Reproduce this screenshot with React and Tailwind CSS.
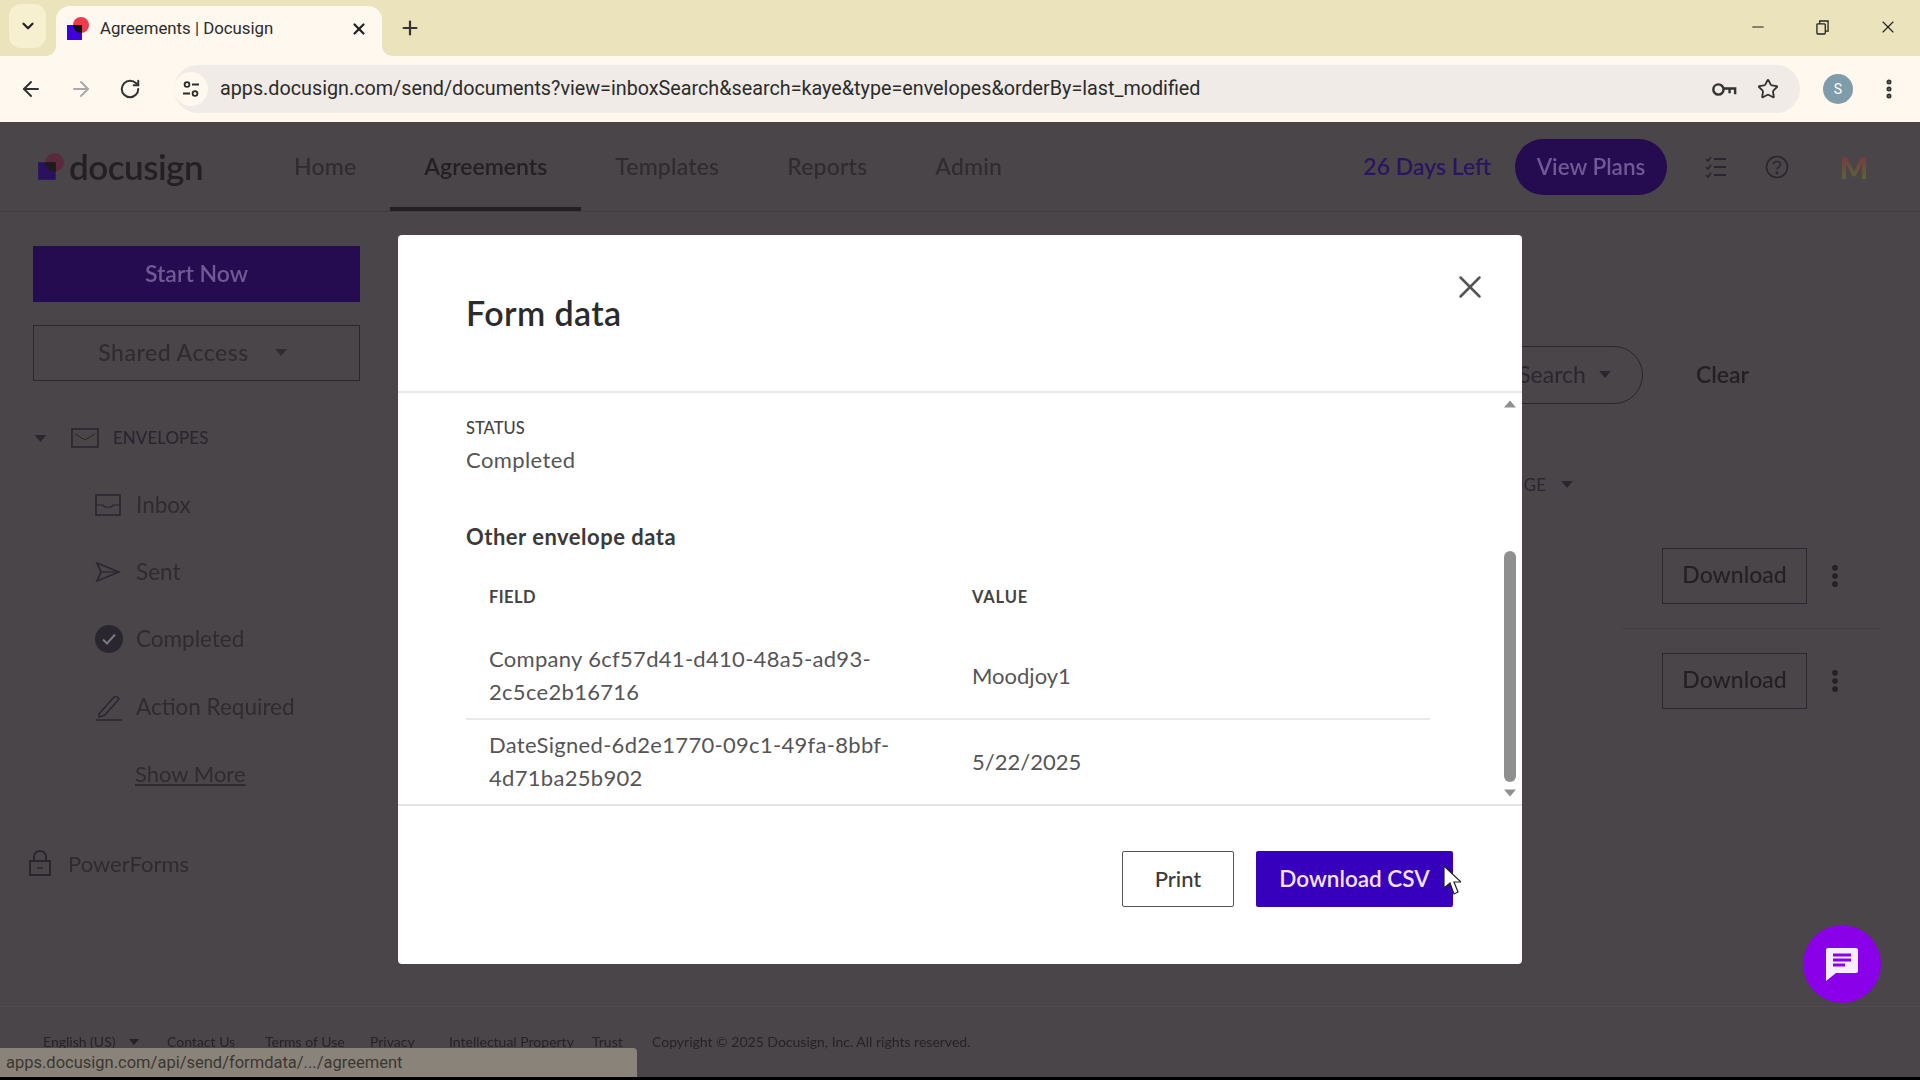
import React from 'react'
import { ArrowLeft, ArrowRight, ChevronDown, EllipsisVertical, Minus, Plus, RotateCw, Star, X } from 'lucide-react'

const Logo = ({ dim }) => (
  <svg viewBox="0 0 24 24" className="w-full h-full">
    <circle cx="15" cy="8" r="8" fill={dim ? '#5b2a3a' : '#f0384f'} />
    <rect x="1" y="8" width="15" height="15" fill={dim ? '#2a1160' : '#4000e0'} />
    <path d="M7 8h9v8A8 8 0 0 1 7 8z" fill={dim ? '#1d1a20' : '#111'} />
  </svg>
)

const Caret = ({ className }) => (
  <svg viewBox="0 0 10 6" className={className} fill="currentColor">
    <path d="M0 0h10L5 6z" />
  </svg>
)

const TabFlare = ({ className }) => (
  <svg viewBox="0 0 10 10" className={className} fill="#fef8ee">
    <path d="M10 0v10H0A10 10 0 0 0 10 0z" />
  </svg>
)

const MailIcon = () => (
  <svg viewBox="0 0 28 20" className="w-[28px] h-[20px]" fill="none" stroke="#2a2630" strokeWidth="1.6">
    <rect x="1" y="1" width="26" height="18" />
    <path d="M4 6l10 6 10-6" strokeWidth="1" />
  </svg>
)

const InboxIcon = () => (
  <svg viewBox="0 0 26 22" className="w-[26px] h-[22px]" fill="none" stroke="#2a2630" strokeWidth="1.6">
    <rect x="1" y="1" width="24" height="20" />
    <path d="M1 11h7c1 3 9 3 10 0h7" strokeWidth="1.2" />
  </svg>
)

const SentIcon = () => (
  <svg viewBox="0 0 26 22" className="w-[26px] h-[22px]" fill="none" stroke="#2a2630" strokeWidth="1.7">
    <path d="M2 2l22 9-22 9 4-9z" />
    <path d="M6 11h18" strokeWidth="1.2" />
  </svg>
)

const DoneIcon = () => (
  <svg viewBox="0 0 28 28" className="w-[28px] h-[28px]">
    <circle cx="14" cy="14" r="14" fill="#2a2630" />
    <path d="M8 14.5l4 4 8-9" fill="none" stroke="#7b7680" strokeWidth="2" />
  </svg>
)

const PenIcon = () => (
  <svg viewBox="0 0 28 28" className="w-[28px] h-[28px]" fill="none" stroke="#2a2630" strokeWidth="1.5">
    <path d="M4 21L19 4c2-1 4 0 5 2L10 22l-6 2z" />
    <path d="M1 27h26" />
  </svg>
)

const LockIcon = () => (
  <svg viewBox="0 0 24 28" className="w-[24px] h-[28px]" fill="none" stroke="#2a2630" strokeWidth="2">
    <path d="M6 12V8a6 6 0 0 1 12 0v4" />
    <rect x="2" y="12" width="20" height="14" />
    <path d="M9 19h6" strokeWidth="1.5" />
  </svg>
)

const TuneIcon = () => (
  <svg viewBox="0 0 20 20" className="w-[20px] h-[20px]" fill="none" stroke="#2b2b2b" strokeWidth="1.8">
    <circle cx="6" cy="5.5" r="2.4" />
    <path d="M11 5.5h7M2 14.5h7" />
    <circle cx="14" cy="14.5" r="2.4" />
  </svg>
)

const KeyIcon = () => (
  <svg viewBox="0 0 28 18" className="w-[26px] h-[17px]" fill="none" stroke="#333" strokeWidth="2.6">
    <circle cx="8" cy="9" r="5.5" />
    <path d="M13.5 8H26v6M20 8v5" />
  </svg>
)

const RestoreIcon = () => (
  <svg viewBox="0 0 14 16" className="w-[13px] h-[15px]" fill="none" stroke="#222" strokeWidth="1.4">
    <rect x="1" y="4" width="9" height="11" rx="1" />
    <path d="M4 4V1h9v11h-3" />
  </svg>
)

const ChecklistIcon = () => (
  <svg viewBox="0 0 24 24" className="w-[24px] h-[24px]" fill="none" stroke="#2a2630" strokeWidth="2">
    <path d="M10 4h12M10 12h12M10 20h12" />
    <path d="M2 4l2 2 3-4M2 12l2 2 3-4M2 20l2 2 3-4" strokeWidth="1.6" />
  </svg>
)

const HelpIcon = () => (
  <svg viewBox="0 0 24 24" className="w-[24px] h-[24px]" fill="none" stroke="#2a2630" strokeWidth="1.6">
    <circle cx="12" cy="12" r="10.5" />
    <path d="M8.5 9.5C8.5 5.5 15.5 5.5 15.5 9.5c0 2.5-3.5 2.5-3.5 5" />
    <circle cx="12" cy="18" r="0.6" />
  </svg>
)

const ChatIcon = () => (
  <svg viewBox="0 0 34 34" className="w-[34px] h-[34px]">
    <path d="M3 1h28a2 2 0 0 1 2 2v21a2 2 0 0 1-2 2H11l-10 8V3a2 2 0 0 1 2-2z" fill="#f7eefd" />
    <path d="M8 8h18M8 13h18M8 18h12" stroke="#8a00e8" strokeWidth="3" />
  </svg>
)

const Cursor = () => (
  <svg viewBox="0 0 18 30" className="w-[18px] h-[30px]">
    <path d="M1 1v22l6-5 4 11 4-2-4-10h7z" fill="#fff" stroke="#222" strokeWidth="1.2" />
  </svg>
)

const navItems = ['Home', 'Agreements', 'Templates', 'Reports', 'Admin']

const sideItems = [
  { label: 'Inbox', icon: <InboxIcon /> },
  { label: 'Sent', icon: <SentIcon /> },
  { label: 'Completed', icon: <DoneIcon /> },
  { label: 'Action Required', icon: <PenIcon /> },
]

const footerLinks = [
  { label: 'Contact Us', cls: 'w-[98px]' },
  { label: 'Terms of Use', cls: 'w-[105px]' },
  { label: 'Privacy', cls: 'w-[79px]' },
  { label: 'Intellectual Property', cls: 'w-[143px]' },
  { label: 'Trust', cls: 'w-[60px]' },
]

const formRows = [
  { field: 'Company 6cf57d41-d410-48a5-ad93-2c5ce2b16716', value: 'Moodjoy1' },
  { field: 'DateSigned-6d2e1770-09c1-49fa-8bbf-4d71ba25b902', value: '5/22/2025' },
]

const DownloadRow = () => (
  <div className="flex items-center h-[104px] w-[258px] justify-start pl-[40px] gap-[20px]">
    <button className="w-[145px] h-[56px] border border-[#2a2630] pb-[2px] text-[23px] text-[#231f24] font-medium">Download</button>
    <EllipsisVertical size={28} strokeWidth={2.8} color="#231f24" className="-ml-[6px]" />
  </div>
)

const FormModal = () => (
  <div className="absolute left-[398px] top-[113px] w-[1124px] h-[729px] bg-white rounded flex flex-col font-['Lato',sans-serif]">
    <div className="h-[158px] shrink-0 border-b-2 border-[#e9e9e9] flex items-start justify-between pl-[68px] pr-[33px]">
      <h1 className="text-[34px] leading-[40px] mt-[58px] font-semibold tracking-[0.4px] text-[#2b2b2b]">Form data</h1>
      <X size={38} strokeWidth={1.6} color="#555" className="mt-[33px]" />
    </div>
    <div className="flex-1 min-h-0 flex border-b-2 border-[#e3e3e3]">
      <div className="flex-1 pl-[68px]">
        <div className="text-[16.5px] leading-[20px] mt-[25px] font-medium text-[#444]">STATUS</div>
        <div className="text-[22px] leading-[28px] mt-[8px] tracking-[0.4px] text-[#555]">Completed</div>
        <h2 className="text-[22px] leading-[28px] mt-[49px] font-bold tracking-[0.5px] text-[#3a3a3a]">Other envelope data</h2>
        <table className="w-[964px] table-fixed border-collapse mt-[34px]">
          <thead>
            <tr className="h-[20px] text-left text-[16.5px] font-bold text-[#444]">
              <th className="w-[483px] pl-[23px] py-0 font-bold tracking-wide">FIELD</th>
              <th className="pl-[23px] py-0 font-bold tracking-wider">VALUE</th>
            </tr>
          </thead>
          <tbody className="text-[22px] leading-[33px] tracking-[0.3px] text-[#555]">
            <tr className="h-[23px]"><td colSpan="2"></td></tr>
            {formRows.map((row, index) => (
              <tr key={index} className={index === 0 ? 'h-[86px] border-b-2 border-[#e9e9e9]' : 'h-[84px]'}>
                <td className="pl-[23px] pr-[23px]">{row.field}</td>
                <td className="pl-[23px] tracking-normal">{row.value}</td>
              </tr>
            ))}
          </tbody>
        </table>
      </div>
      <div className="w-[12px] mr-[6px] shrink-0 flex flex-col items-center text-[#8f8f8f]">
        <Caret className="w-[12px] h-[8px] mt-[7px] rotate-180" />
        <div className="w-[12px] h-[231px] mt-[143px] rounded-full bg-[#8f8f8f]"></div>
        <Caret className="w-[12px] h-[8px] mt-[7px]" />
      </div>
    </div>
    <div className="h-[158px] shrink-0 flex justify-end items-start gap-[22px] pt-[45px] pr-[69px]">
      <button className="w-[112px] h-[56px] border border-[#555] rounded-[2px] pb-[2px] text-[22px] font-medium text-[#3a3a3a]">Print</button>
      <button className="relative w-[197px] h-[56px] bg-[#3600bd] rounded-[2px] text-[22.5px] font-semibold text-[#f6e2ff]">
        Download CSV
        <span className="absolute left-[187px] top-[14px]"><Cursor /></span>
      </button>
    </div>
  </div>
)

const App = () => {
  return (
    <div className="w-[1920px] h-[1080px] overflow-hidden flex flex-col bg-black font-['Roboto',sans-serif]">
      {/* browser tabs */}
      <div className="h-[56px] shrink-0 bg-[#ebe3bb] flex items-end pl-[9px]">
        <div className="w-[37px] h-[44px] mb-[8px] rounded-[12px] bg-[#f7f0d0] flex items-center justify-center">
          <ChevronDown size={18} strokeWidth={3} color="#222" />
        </div>
        <div className="relative w-[326px] h-[50px] ml-[10px] rounded-t-[14px] bg-[#fef8ee] flex items-center pl-[10px] pr-[14px] pb-[5px]">
          <TabFlare className="absolute -left-[10px] bottom-0 w-[10px] h-[10px]" />
          <TabFlare className="absolute -right-[10px] bottom-0 w-[10px] h-[10px] -scale-x-100" />
          <span className="w-[24px] h-[24px] shrink-0"><Logo /></span>
          <span className="ml-[10px] text-[16.8px] text-[#2b2b2b]">Agreements | Docusign</span>
          <X size={18} strokeWidth={3} color="#222" className="ml-auto" />
        </div>
        <Plus size={22} strokeWidth={2.4} color="#333" className="ml-[17px] mb-[17px]" />
        <div className="ml-auto h-[56px] flex items-center gap-[49px] pr-[22px] pb-[2px]">
          <Minus size={18} strokeWidth={1.6} color="#222" />
          <RestoreIcon />
          <X size={20} strokeWidth={1.4} color="#222" />
        </div>
      </div>

      {/* browser toolbar */}
      <div className="h-[66px] shrink-0 bg-[#fef8ee] flex items-center">
        <div className="w-[174px] flex items-center pl-[19px] gap-[26px] shrink-0">
          <ArrowLeft size={24} strokeWidth={2} color="#333" />
          <ArrowRight size={24} strokeWidth={2} color="#aaa" />
          <RotateCw size={22} strokeWidth={2.2} color="#333" />
        </div>
        <div className="w-[1626px] h-[48px] rounded-full bg-[#f0ebe6] flex items-center pr-[21px]">
          <span className="w-[34px] h-[34px] rounded-full bg-[#fef8ee] flex items-center justify-center shrink-0"><TuneIcon /></span>
          <span className="ml-[12px] text-[19.75px] text-[#2b2b2b]">apps.docusign.com/send/documents?view=inboxSearch&amp;search=kaye&amp;type=envelopes&amp;orderBy=last_modified</span>
          <span className="ml-auto flex items-center gap-[20px]">
            <KeyIcon />
            <Star size={22} strokeWidth={2} color="#333" />
          </span>
        </div>
        <div className="w-[30px] h-[30px] ml-[23px] rounded-full bg-[#7f9cab] text-white text-[14px] flex items-center justify-center">S</div>
        <EllipsisVertical size={24} strokeWidth={3} color="#333" className="ml-[24px]" />
      </div>

      {/* dimmed app */}
      <div className="relative h-[955px] shrink-0 bg-[#4a4548] font-['Lato',sans-serif]">
        <div className="h-full flex flex-col blur-[0.6px]">
          <header className="h-[90px] shrink-0 flex items-center border-b border-[#413d41]">
            <div className="w-[260px] shrink-0 pl-[37px] flex items-center gap-[4px]">
              <span className="w-[28px] h-[28px] shrink-0"><Logo dim /></span>
              <span className="text-[35px] font-semibold tracking-[-0.5px] text-[#231f24]">docusign</span>
            </div>
            <nav className="h-full flex">
              {navItems.map((item) => (
                <a key={item} className={item === 'Agreements'
                  ? 'px-[34px] pt-[4px] flex items-center text-[23px] font-semibold text-[#231f24] border-b-4 border-[#231f24]'
                  : 'px-[34px] pt-[4px] flex items-center text-[23px] tracking-[0.2px] font-medium text-[#2f2b30] border-b-4 border-transparent'}>
                  {item}
                </a>
              ))}
            </nav>
            <div className="ml-auto flex items-center pr-[51px]">
              <span className="text-[23px] font-semibold text-[#2b1560]">26 Days Left</span>
              <button className="w-[152px] h-[56px] ml-[24px] rounded-full bg-[#250b4f] text-[22.5px] font-semibold text-[#6f5a95]">View Plans</button>
              <span className="ml-[37px]"><ChecklistIcon /></span>
              <span className="ml-[37px]"><HelpIcon /></span>
              <span className="ml-[50px] w-[30px] h-[34px] text-[30px] leading-[34px] font-black text-transparent bg-clip-text bg-gradient-to-b from-[#7a2a40] to-[#4f6a38] flex items-center justify-center">M</span>
            </div>
          </header>

          <div className="flex-1 min-h-0 flex">
            <aside className="w-[398px] shrink-0 pl-[33px] pr-[38px] pt-[34px]">
              <button className="w-[327px] h-[56px] pb-[2px] bg-[#250b4f] text-[23px] font-semibold text-[#6f5a95]">Start Now</button>
              <button className="w-[327px] h-[56px] mt-[23px] pb-[2px] pr-[8px] border border-[#2a2630] flex items-center justify-center gap-[26px] text-[23px] tracking-[0.5px] font-medium text-[#2f2b30]">
                Shared Access
                <Caret className="w-[12px] h-[7px]" />
              </button>
              <div className="flex items-center h-[30px] mt-[42px] text-[#2a2630]">
                <Caret className="w-[13px] h-[7px] ml-[1px]" />
                <span className="ml-[24px]"><MailIcon /></span>
                <span className="ml-[14px] text-[17px] font-medium">ENVELOPES</span>
              </div>
              <ul className="mt-[18px]">
                {sideItems.map((item) => (
                  <li key={item.label} className="h-[67.3px] flex items-center text-[22.5px] text-[#2f2b30]">
                    <span className="w-[103px] pl-[62px] flex items-center shrink-0">{item.icon}</span>
                    {item.label}
                  </li>
                ))}
                <li className="h-[67.3px] flex items-center pl-[102px] text-[22px] text-[#2f2b30] underline">Show More</li>
              </ul>
              <div className="flex items-center h-[40px] mt-[36px] text-[22px] text-[#2f2b30]">
                <span className="-ml-[5px]"><LockIcon /></span>
                <span className="ml-[16px]">PowerForms</span>
              </div>
            </aside>

            <main className="flex-1 min-w-0 relative">
              <div className="mt-[134px] flex items-center justify-end pr-[171px] gap-[53px]">
                <div className="w-[200px] h-[58px] rounded-full border border-[#2a2630] flex items-center justify-end gap-[13px] pb-[2px] pr-[31px] text-[23px] text-[#2a2630]">
                  Search
                  <Caret className="w-[12px] h-[7px]" />
                </div>
                <span className="text-[23px] pb-[2px] font-semibold text-[#231f24]">Clear</span>
              </div>
              <div className="mt-[68px] flex items-center justify-end pr-[347px] gap-[15px] text-[17px] text-[#2a2630]">
                RANGE
                <Caret className="w-[12px] h-[7px]" />
              </div>
              <div className="mt-[26px] ml-auto w-[298px] pr-[40px]">
                <DownloadRow />
                <div className="h-px bg-[#413d41]"></div>
                <DownloadRow />
              </div>
            </main>
          </div>

          <footer className="h-[71px] shrink-0 border-t border-[#4f4a4e] pt-[26px] pl-[43px] flex items-start text-[14px] leading-[18px] text-[#262228]">
            <span className="w-[124px] flex items-center gap-[14px]">English (US) <Caret className="w-[10px] h-[6px]" /></span>
            {footerLinks.map((link) => (
              <span key={link.label} className={link.cls}>{link.label}</span>
            ))}
            <span>Copyright © 2025 Docusign, Inc. All rights reserved.</span>
          </footer>
        </div>

        <FormModal />

        <div className="absolute right-[39px] top-[803px] w-[78px] h-[78px] rounded-full bg-[#8a00e8] flex items-center justify-center">
          <ChatIcon />
        </div>
        <div className="absolute left-0 bottom-0 w-[637px] h-[29px] bg-[#8a8379] rounded-tr-[4px] pl-[6px] pt-[2px] flex items-center text-[16.5px] text-[#3a3733] font-['Roboto',sans-serif]">
          apps.docusign.com/api/send/formdata/.../agreement
        </div>
      </div>
    </div>
  )
}

export default App
